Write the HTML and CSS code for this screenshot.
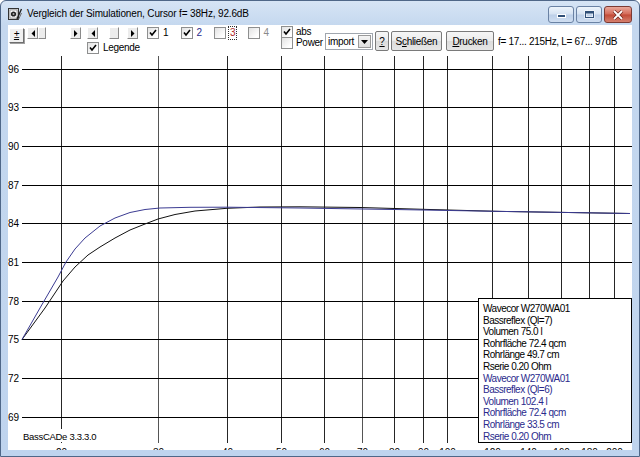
FILE: index.html
```html
<!DOCTYPE html>
<html lang="de">
<head>
<meta charset="utf-8">
<title>Vergleich der Simulationen</title>
<link rel="stylesheet" href="styles.css">
</head>
<body>
<div class="window">
  <div class="titlebar">
    <svg class="app-icon" width="14" height="14" viewBox="0 0 14 14">
      <rect x="0.5" y="1.5" width="10" height="11" fill="#d8d8d8" stroke="#333"/>
      <rect x="2" y="3" width="7" height="8" fill="#fff" stroke="#777" stroke-width="0.6"/>
      <circle cx="5.5" cy="7" r="2.6" fill="#222"/>
      <circle cx="5.5" cy="7" r="1" fill="#aaa"/>
      <path d="M9 12 L13.5 2" stroke="#222" stroke-width="1.4"/>
      <path d="M10.5 12.5 L13.5 6" stroke="#666" stroke-width="1"/>
    </svg>
    <div class="title">Vergleich der Simulationen, Cursor f= 38Hz, 92.6dB</div>
    <div class="caption-btns">
      <div class="cap"><svg width="11" height="9" viewBox="0 0 11 9"><rect x="1.5" y="4.5" width="8" height="3" fill="#2f4f77" stroke="#fff"/></svg></div>
      <div class="cap"><svg width="11" height="9" viewBox="0 0 11 9"><rect x="1.5" y="1.5" width="8" height="6" fill="none" stroke="#fff" stroke-width="2"/><rect x="1.5" y="1.5" width="8" height="6" fill="none" stroke="#2f4f77" stroke-width="1"/><rect x="2" y="2" width="7" height="1.5" fill="#2f4f77"/></svg></div>
      <div class="cap close"><svg width="12" height="10" viewBox="0 0 12 10"><path d="M2 1 L10 9 M10 1 L2 9" stroke="#6e231a" stroke-width="3.2"/><path d="M2 1 L10 9 M10 1 L2 9" stroke="#fff" stroke-width="1.8"/></svg></div>
    </div>
  </div>

  <div class="client">
    <div class="toolbar">
      <div class="tb-left">
        <div class="tb-row">
          <div class="plus-btn">±</div>
          <div class="sb sb1">
            <span class="sb-btn"><svg width="4" height="7" viewBox="0 0 4 7"><polygon points="4,0 4,7 0.5,3.5" fill="#000"/></svg></span>
            <span class="sb-thumb"></span>
            <span class="sb-track"></span>
            <span class="sb-btn"><svg width="4" height="7" viewBox="0 0 4 7"><polygon points="0,0 0,7 3.5,3.5" fill="#000"/></svg></span>
          </div>
          <div class="sb sb2">
            <span class="sb-btn"><svg width="4" height="7" viewBox="0 0 4 7"><polygon points="4,0 4,7 0.5,3.5" fill="#000"/></svg></span>
            <span class="sb-gap"></span>
            <span class="sb-thumb wide"></span>
            <span class="sb-track"></span>
            <span class="sb-btn"><svg width="4" height="7" viewBox="0 0 4 7"><polygon points="0,0 0,7 3.5,3.5" fill="#000"/></svg></span>
          </div>
          <div class="cb-item">
            <span class="cb"><svg width="8" height="8" viewBox="0 0 8 8"><path d="M1 3.5 L3 6 L7 1" fill="none" stroke="#000" stroke-width="1.6"/></svg></span>
            <span class="cb-label">1</span>
          </div>
          <div class="cb-item">
            <span class="cb"><svg width="8" height="8" viewBox="0 0 8 8"><path d="M1 3.5 L3 6 L7 1" fill="none" stroke="#000" stroke-width="1.6"/></svg></span>
            <span class="cb-label blue">2</span>
          </div>
          <div class="cb-item">
            <span class="cb"></span>
            <span class="cb-label red focus">3</span>
          </div>
          <div class="cb-item">
            <span class="cb"></span>
            <span class="cb-label gray">4</span>
          </div>
        </div>
        <div class="tb-row2">
          <span class="cb"><svg width="8" height="8" viewBox="0 0 8 8"><path d="M1 3.5 L3 6 L7 1" fill="none" stroke="#000" stroke-width="1.6"/></svg></span>
          <span class="cb-label">Legende</span>
        </div>
      </div>

      <div class="absgroup">
        <div class="abs-row">
          <span class="cb"><svg width="8" height="8" viewBox="0 0 8 8"><path d="M1 3.5 L3 6 L7 1" fill="none" stroke="#000" stroke-width="1.6"/></svg></span>
          <span class="cb-label">abs</span>
        </div>
        <div class="abs-row">
          <span class="cb"></span>
          <span class="cb-label">Power</span>
        </div>
      </div>

      <div class="combo">
        <span class="combo-text">import</span>
        <span class="combo-btn"><svg width="7" height="4" viewBox="0 0 7 4"><polygon points="0,0 7,0 3.5,4" fill="#000"/></svg></span>
      </div>
      <div class="pbtn qbtn"><u>?</u></div>
      <div class="pbtn closebtn">S<u>c</u>hließen</div>
      <div class="pbtn printbtn"><u>D</u>rucken</div>
      <div class="range">f= 17... 215Hz, L= 67... 97dB</div>
    </div>

    <div class="plot">
      <svg class="chart" width="624" height="394" viewBox="8 56 624 394">
        <g class="vgrid">
          <line x1="61.5" y1="56" x2="61.5" y2="443"/>
          <line class="soft" x1="158.5" y1="56" x2="158.5" y2="443"/>
          <line x1="227.5" y1="56" x2="227.5" y2="443"/>
          <line x1="281.5" y1="56" x2="281.5" y2="443"/>
          <line x1="324.5" y1="56" x2="324.5" y2="443"/>
          <line class="soft" x1="362.5" y1="56" x2="362.5" y2="443"/>
          <line x1="394.5" y1="56" x2="394.5" y2="443"/>
          <line x1="423.5" y1="56" x2="423.5" y2="443"/>
          <line x1="447.5" y1="56" x2="447.5" y2="443"/>
          <line x1="492.5" y1="56" x2="492.5" y2="443"/>
          <line x1="528.5" y1="56" x2="528.5" y2="443"/>
          <line x1="561.5" y1="56" x2="561.5" y2="443"/>
          <line x1="589.5" y1="56" x2="589.5" y2="443"/>
          <line x1="614.5" y1="56" x2="614.5" y2="443"/>
        </g>
        <g class="hgrid">
          <line x1="22" y1="69.5" x2="632" y2="69.5"/>
          <line x1="22" y1="107.5" x2="632" y2="107.5"/>
          <line x1="22" y1="146.5" x2="632" y2="146.5"/>
          <line x1="22" y1="185.5" x2="632" y2="185.5"/>
          <line x1="22" y1="223.5" x2="632" y2="223.5"/>
          <line x1="22" y1="262.5" x2="632" y2="262.5"/>
          <line x1="22" y1="301.5" x2="632" y2="301.5"/>
          <line x1="22" y1="339.5" x2="632" y2="339.5"/>
          <line x1="22" y1="378.5" x2="632" y2="378.5"/>
          <line x1="22" y1="417.5" x2="632" y2="417.5"/>
        </g>
        <g class="ylabels">
          <text x="8" y="73">96</text>
          <text x="8" y="111">93</text>
          <text x="8" y="150">90</text>
          <text x="8" y="189">87</text>
          <text x="8" y="227">84</text>
          <text x="8" y="266">81</text>
          <text x="8" y="305">78</text>
          <text x="8" y="343">75</text>
          <text x="8" y="382">72</text>
          <text x="8" y="421">69</text>
        </g>
        <g class="xlabels">
          <text x="61.5" y="456">20</text>
          <text x="158.5" y="456">30</text>
          <text x="227.5" y="456">40</text>
          <text x="281.5" y="456">50</text>
          <text x="324.5" y="456">60</text>
          <text x="362.5" y="456">70</text>
          <text x="394.5" y="456">80</text>
          <text x="423.5" y="456">90</text>
          <text x="447.5" y="456">100</text>
          <text x="492.5" y="456">120</text>
          <text x="528.5" y="456">140</text>
          <text x="561.5" y="456">160</text>
          <text x="589.5" y="456">180</text>
          <text x="614.5" y="456">200</text>
        </g>
        <polyline class="curve c1" points="22,339.5 45,308 63,281 75,267 88,255 100,247 115,238 130,230 145,224 158,219 175,214.5 195,211 227,208.3 260,207 300,206.8 360,207.5 430,209.5 500,211.4 630,213.5"/>
        <polyline class="curve c2" points="22,339.5 40,308 58,277 66,262 75,249 85,238 100,226 115,218 130,212.5 145,209.5 160,208 190,207.3 227,207.2 300,208 400,209.6 500,211.4 630,213.5"/>
        <rect class="ver-bg" x="22" y="429" width="80" height="13"/>
        <text class="ver" x="23" y="440">BassCADe 3.3.3.0</text>
      </svg>

      <div class="legend">
        <div class="lg">Wavecor W270WA01</div>
        <div class="lg">Bassreflex (Ql=7)</div>
        <div class="lg">Volumen 75.0 l</div>
        <div class="lg">Rohrfläche 72.4 qcm</div>
        <div class="lg">Rohrlänge 49.7 cm</div>
        <div class="lg">Rserie 0.20 Ohm</div>
        <div class="lg blue">Wavecor W270WA01</div>
        <div class="lg blue">Bassreflex (Ql=6)</div>
        <div class="lg blue">Volumen 102.4 l</div>
        <div class="lg blue">Rohrfläche 72.4 qcm</div>
        <div class="lg blue">Rohrlänge 33.5 cm</div>
        <div class="lg blue">Rserie 0.20 Ohm</div>
      </div>
    </div>
  </div>
</div>
</body>
</html>
```

FILE: styles.css
```css
* { box-sizing: border-box; }
html, body { margin: 0; padding: 0; }
body {
  width: 640px;
  height: 457px;
  overflow: hidden;
  font-family: "Liberation Sans", Arial, sans-serif;
  background: #ffffff;
}

.window {
  width: 640px;
  height: 457px;
  border: 1px solid #4f6788;
  border-radius: 6px 6px 0 0;
  background: linear-gradient(to bottom, #d6e4f5 0, #c5d8ef 24px, #bfd4ee 100%);
  padding: 0 7px 6px 7px;
  display: flex;
  flex-direction: column;
}

/* ---------- title bar ---------- */
.titlebar {
  height: 24px;
  flex-shrink: 0;
  display: flex;
  align-items: center;
}
.app-icon { flex-shrink: 0; margin-top: 1px; }
.title {
  flex: 1;
  margin-left: 5px;
  font-size: 10px;
  letter-spacing: -0.15px;
  color: #000;
  white-space: nowrap;
}
.caption-btns {
  display: flex;
  gap: 2px;
  align-self: flex-start;
  margin-top: 5px;
}
.cap {
  width: 26px;
  height: 17px;
  border: 1px solid #6a82a4;
  border-radius: 3px;
  background: linear-gradient(to bottom, #eef4fb 0, #d5e2f2 48%, #bccfe8 52%, #cfdef1 100%);
  display: flex;
  align-items: center;
  justify-content: center;
}
.cap.close {
  width: 28px;
  border-color: #7c3a33;
  background: linear-gradient(to bottom, #e9a89b 0, #d46a58 48%, #c24a36 52%, #d5806e 100%);
}

/* ---------- client ---------- */
.client {
  flex: 1;
  background: #ffffff;
  display: flex;
  flex-direction: column;
  overflow: hidden;
}

.toolbar {
  height: 31px;
  flex-shrink: 0;
  display: flex;
  font-size: 10px;
  letter-spacing: -0.3px;
  color: #000;
}

.tb-left {
  display: flex;
  flex-direction: column;
  padding-left: 1px;
}
.tb-row {
  display: flex;
  align-items: flex-start;
  margin-top: 2px;
  height: 16px;
}
.plus-btn {
  width: 15px;
  height: 15px;
  margin-top: 1px;
  background: #f0f0f0;
  border: 1px solid;
  border-color: #ffffff #6f6f6f #6f6f6f #ffffff;
  box-shadow: 1px 1px 0 #a0a0a0;
  font-size: 10px;
  line-height: 12px;
  text-align: center;
  text-decoration: underline;
}

.sb {
  display: flex;
  height: 12px;
}
.sb1 { width: 54px; margin-left: 3px; }
.sb2 { width: 51px; margin-left: 6px; }
.sb-btn, .sb-thumb {
  height: 12px;
  background: #ececec;
  border: 1px solid;
  border-color: #ffffff #8a8a8a #8a8a8a #ffffff;
}
.sb-btn {
  width: 11px;
  display: flex;
  align-items: center;
  justify-content: center;
}
.sb-thumb { width: 8px; }
.sb-thumb.wide { width: 10px; }
.sb-gap { width: 11px; }
.sb-track { flex: 1; }

.cb-item {
  width: 33.5px;
  display: flex;
  align-items: center;
  height: 12px;
}
.sb2 + .cb-item { margin-left: 9px; }

.cb {
  width: 12px;
  height: 12px;
  flex-shrink: 0;
  border: 1px solid #8e8f8f;
  background: linear-gradient(135deg, #e2e2e2 0, #ffffff 80%);
  display: flex;
  align-items: center;
  justify-content: center;
}
.cb-label {
  margin-left: 4px;
  line-height: 12px;
  white-space: nowrap;
}
.cb-label.blue { color: #2a2a8c; }
.cb-label.red { color: #b02a2a; }
.cb-label.gray { color: #8a8a8a; }
.cb-label.focus {
  outline: 1px dotted #303030;
  padding: 0 1px;
  margin-left: 3px;
}

.tb-row2 {
  display: flex;
  align-items: center;
  padding-left: 78px;
  margin-top: -1px;
}

.absgroup {
  width: 44px;
  flex-shrink: 0;
  display: flex;
  flex-direction: column;
  margin-top: 1px;
}
.abs-row {
  display: flex;
  align-items: center;
  height: 11.5px;
}
.abs-row .cb-label { margin-left: 3px; }

.combo {
  width: 48px;
  height: 17px;
  margin-top: 8px;
  border: 1px solid #a0a6ae;
  background: #ffffff;
  display: flex;
  align-items: center;
  justify-content: space-between;
  padding: 0 1px 0 2px;
}
.combo-text { line-height: 14px; }
.combo-btn {
  width: 13px;
  height: 13px;
  background: linear-gradient(to bottom, #f4f4f4, #dedede);
  border: 1px solid #9a9a9a;
  display: flex;
  align-items: center;
  justify-content: center;
}

.pbtn {
  height: 20px;
  margin-top: 6px;
  border: 1px solid #7a7a7a;
  border-radius: 2px;
  background: linear-gradient(to bottom, #f6f6f6 0, #ebebeb 50%, #dcdcdc 51%, #e6e6e6 100%);
  display: flex;
  align-items: center;
  justify-content: center;
  white-space: nowrap;
}
.qbtn { width: 14px; margin-left: 2px; }
.closebtn { width: 51px; margin-left: 2px; }
.printbtn { width: 48px; margin-left: 4px; }

.range {
  margin-left: 4px;
  margin-top: 11px;
  white-space: nowrap;
}

/* ---------- plot ---------- */
.plot {
  flex: 1;
  position: relative;
  overflow: hidden;
}
.chart { display: block; }
.hgrid line { stroke: #000; stroke-width: 1; }
.vgrid line { stroke: #262626; stroke-width: 1; }
.vgrid line.soft { stroke: #555; }
.ylabels text, .xlabels text, .ver {
  font-family: "Liberation Sans", Arial, sans-serif;
  font-size: 10px;
  fill: #000;
}
.xlabels text { text-anchor: middle; }
.ver { font-size: 9.5px; letter-spacing: -0.3px; }
.ver-bg { fill: #ffffff; }
.curve { fill: none; stroke-width: 1; }
.c1 { stroke: #111; }
.c2 { stroke: #3b3b92; }

.legend {
  position: absolute;
  left: 470px;
  top: 242px;
  right: 0;
  bottom: 7px;
  background: #ffffff;
  border: 1px solid #000;
  padding: 4px 0 0 4px;
  font-size: 10px;
  letter-spacing: -0.5px;
}
.lg {
  line-height: 11.6px;
  height: 11.6px;
  white-space: nowrap;
  color: #000;
}
.lg.blue { color: #2a2a8c; }
```
